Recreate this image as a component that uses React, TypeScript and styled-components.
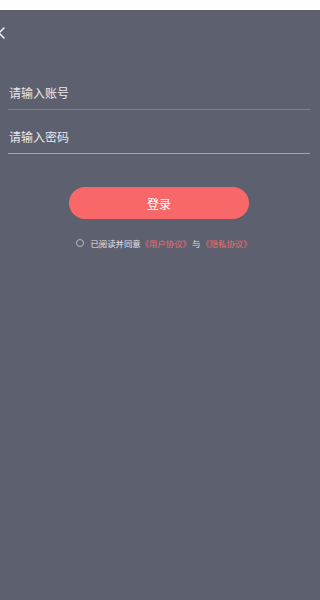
import React from 'react';
import styled, { createGlobalStyle } from 'styled-components';

const GlobalStyle = createGlobalStyle`
  html, body {
    margin: 0;
    padding: 0;
    background: #ffffff;
  }
  body {
    font-family: "Noto Sans CJK SC", "Noto Sans", sans-serif;
  }
`;

const Page = styled.div`
  width: 320px;
  height: 600px;
  display: flex;
  flex-direction: column;
  overflow: hidden;
`;

const StatusBar = styled.div`
  height: 10px;
  background: #ffffff;
  flex-shrink: 0;
`;

const Screen = styled.div`
  flex: 1;
  background: #5d606f;
  display: flex;
  flex-direction: column;
`;

const Header = styled.div`
  height: 46px;
  display: flex;
  align-items: center;
`;

const BackButton = styled.button`
  border: none;
  background: none;
  padding: 0;
  margin-left: -4px;
  width: 12px;
  height: 14px;
  display: flex;
  align-items: center;
  color: #ffffff;
`;

const Form = styled.div`
  margin: 10px 10px 0 8px;
  display: flex;
  flex-direction: column;
`;

const Field = styled.div<{ $line: string }>`
  height: 44px;
  box-sizing: border-box;
  padding: 9px 0 0 1px;
  display: flex;
  align-items: center;
  border-bottom: 1px solid ${p => p.$line};
  color: #e8e8ec;
  font-size: 12px;
`;

const LoginButton = styled.button`
  align-self: center;
  margin-top: 33px;
  width: 180px;
  height: 32px;
  border: none;
  border-radius: 16px;
  background: #f96868;
  color: #ffffff;
  font-family: inherit;
  font-size: 12px;
  display: flex;
  align-items: center;
  justify-content: center;
`;

const Agreement = styled.div`
  align-self: center;
  margin-top: 18px;
  margin-left: 10px;
  display: flex;
  align-items: center;
  font-size: 8.4px;
  color: #e4e4ea;
  white-space: nowrap;
`;

const Radio = styled.span`
  width: 6px;
  height: 6px;
  border: 1px solid #b8bac4;
  border-radius: 50%;
  margin-right: 6px;
`;

const Link = styled.span`
  color: #ec6e70;
`;

const Joiner = styled.span`
  margin: 0 1px;
`;

export default function App() {
  return (
    <Page>
      <GlobalStyle />
      <StatusBar />
      <Screen>
        <Header>
          <BackButton aria-label="返回">
            <svg width="10" height="12" viewBox="0 0 10 12" fill="none">
              <path d="M8 1 L3 6 L8 11" stroke="#ffffff" strokeWidth="1.4" strokeLinecap="round" strokeLinejoin="round" />
            </svg>
          </BackButton>
        </Header>
        <Form>
          <Field $line="#7e808e">请输入账号</Field>
          <Field $line="#a2a4ae">请输入密码</Field>
          <LoginButton>登录</LoginButton>
          <Agreement>
            <Radio />
            已阅读并同意<Link>《用户协议》</Link><Joiner>与</Joiner><Link>《隐私协议》</Link>
          </Agreement>
        </Form>
      </Screen>
    </Page>
  );
}
